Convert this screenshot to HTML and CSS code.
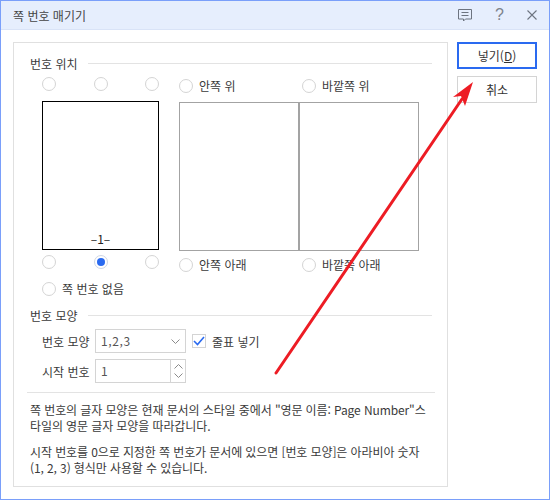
FILE: index.html
```html
<!DOCTYPE html>
<html lang="ko">
<head>
    <meta charset="UTF-8">
    <title>쪽 번호 매기기</title>
    <link rel="stylesheet" href="styles.css">
</head>
<body>
    <div class="window">
        <header class="titlebar">
            <span class="title">쪽 번호 매기기</span>
            <div class="title-icons">
                <svg width="14" height="13" viewBox="0 0 14 13" fill="none" stroke="#6d7480" stroke-width="1"><path d="M.5.5h13v9.500H7.500l-2 2v-2H.5z"/><path d="M3.500 3.500h7M3.500 6.500h7"/></svg>
                <span class="help">?</span>
                <svg width="10" height="10" viewBox="0 0 10 10" fill="none" stroke="#6d7480" stroke-width="1.1"><path d="M.5.5l9 9M9.500 .5l-9 9"/></svg>
            </div>
        </header>
        <div class="content">
            <main class="panel">
                <div class="group-title"><span>번호 위치</span><i></i></div>
                <section class="position">
                    <div class="single">
                        <div class="radio-row"><span class="radio"></span><span class="radio"></span><span class="radio"></span></div>
                        <div class="page"><span>–1–</span></div>
                        <div class="radio-row bottom"><span class="radio"></span><span class="radio on"></span><span class="radio"></span></div>
                        <label class="option none"><span class="radio"></span>쪽 번호 없음</label>
                    </div>
                    <div class="double">
                        <div class="option-row"><label class="option"><span class="radio"></span>안쪽 위</label><label class="option"><span class="radio"></span>바깥쪽 위</label></div>
                        <div class="spread"><div></div><div></div></div>
                        <div class="option-row lower"><label class="option"><span class="radio"></span>안쪽 아래</label><label class="option"><span class="radio"></span>바깥쪽 아래</label></div>
                    </div>
                </section>
                <div class="group-title shape-title"><span>번호 모양</span><i></i></div>
                <section class="shape">
                    <div class="field">
                        <label>번호 모양</label>
                        <div class="input select">1,2,3
                            <svg class="chev" width="9" height="5" viewBox="0 0 9 5" fill="none" stroke="#8a8a8a"><path d="M.5.5l4 4 4-4"/></svg>
                        </div>
                        <span class="check"><svg width="12" height="10" viewBox="0 0 12 10" fill="none" stroke="#2a6af0" stroke-width="1.6"><path d="M1 5l3.500 3.500L11 1"/></svg></span>
                        <span class="check-label">줄표 넣기</span>
                    </div>
                    <div class="field">
                        <label>시작 번호</label>
                        <div class="input spin">1
                            <div class="spinner">
                                <svg width="9" height="5" viewBox="0 0 9 5" fill="none" stroke="#8a8a8a"><path d="M.5 4.500l4-4 4 4"/></svg>
                                <svg width="9" height="5" viewBox="0 0 9 5" fill="none" stroke="#8a8a8a"><path d="M.5.5l4 4 4-4"/></svg>
                            </div>
                        </div>
                    </div>
                </section>
                <section class="notes">
                    <p>쪽 번호의 글자 모양은 현재 문서의 스타일 중에서 "영문 이름: Page Number"스타일의 영문 글자 모양을 따라갑니다.</p>
                    <p>시작 번호를 0으로 지정한 쪽 번호가 문서에 있으면 [번호 모양]은 아라비아 숫자 (1, 2, 3) 형식만 사용할 수 있습니다.</p>
                </section>
            </main>
            <aside class="buttons">
                <button class="btn primary">넣기(<u>D</u>)</button>
                <button class="btn">취소</button>
            </aside>
        </div>
        <svg class="arrow" width="550" height="500" viewBox="0 0 550 500">
            <path d="M276 373L462 99" stroke="#ed1c24" stroke-width="3" stroke-linecap="round" fill="none"/>
            <path d="M473 82L453 97 461 96 465 106z" fill="#ed1c24"/>
        </svg>
    </div>
</body>
</html>
```

FILE: styles.css
```css
* {
    margin: 0;
    padding: 0;
    box-sizing: border-box;
}

body {
    font-family: "Noto Sans CJK KR", "Noto Sans", sans-serif;
    font-size: 12px;
    color: #3a3a3a;
    background: #fff;
}

.window {
    position: relative;
    width: 550px;
    height: 500px;
    border: 1px solid #7a9ffa;
    overflow: hidden;
}

.titlebar {
    height: 29px;
    background: #e6eefd;
    border-bottom: 1px solid #d9e3f7;
    display: flex;
    align-items: center;
    justify-content: space-between;
    padding: 0 12px;
}

.title {
    font-size: 12px;
    color: #444;
}

.title-icons {
    display: flex;
    align-items: center;
    gap: 23px;
    color: #7d838d;
}

.help {
    font-family: "Liberation Sans", sans-serif;
    font-size: 16px;
    line-height: 16px;
}

.content {
    display: flex;
    padding: 12px 12px 0;
    gap: 9px;
}

.panel {
    width: 435px;
    height: 445px;
    border: 1px solid #e0e0e0;
    padding: 0 15px 0 16px;
}

.group-title {
    display: flex;
    align-items: center;
    gap: 10px;
    height: 20px;
    margin-top: 10px;
}

.group-title i {
    flex: 1;
    height: 1px;
    background: #e3e3e3;
}

.position {
    display: flex;
    height: 226px;
    padding-left: 12px;
    margin-top: 3px;
}

.single {
    width: 137px;
}

.radio-row {
    display: flex;
    justify-content: space-between;
    width: 117px;
    height: 24px;
    margin-top: 1px;
}

.radio-row.bottom {
    margin-top: 5px;
    height: 18px;
}

.radio {
    display: inline-block;
    flex: none;
    width: 14px;
    height: 14px;
    border: 1px solid #d4d4d4;
    border-radius: 50%;
    background: #fff;
}

.radio.on {
    position: relative;
    border-color: #cfd6e4;
}

.radio.on::after {
    content: "";
    position: absolute;
    left: 2px;
    top: 2px;
    width: 8px;
    height: 8px;
    border-radius: 50%;
    background: #2a6af0;
}

.page {
    width: 117px;
    height: 149px;
    border: 1px solid #000;
    display: flex;
    align-items: flex-end;
    justify-content: center;
    color: #222;
    line-height: 17px;
    padding-bottom: 2px;
}

.option {
    display: flex;
    align-items: center;
    gap: 6px;
    line-height: 14px;
}

.option.none {
    margin-top: 9px;
}

.option-row {
    display: flex;
    align-items: flex-start;
    height: 24px;
    margin-top: 3px;
}

.option-row .option {
    width: 123px;
}

.option-row.lower {
    height: 14px;
    margin-top: 7px;
}

.spread {
    display: flex;
    width: 240px;
    height: 149px;
    margin-top: -1px;
    border: 1px solid #a3a3a3;
}

.spread div {
    flex: 1;
}

.spread div:first-child {
    border-right: 2px solid #a3a3a3;
}

.shape-title {
    margin-top: 3px;
}

.shape {
    padding: 4px 0 9px 15px;
    border-bottom: 1px solid #e3e3e3;
    margin-left: -3px;
    margin-right: -3px;
}

.field {
    display: flex;
    align-items: center;
    height: 24px;
    margin-bottom: 6px;
}

.field:last-child {
    margin-bottom: 0;
}

.field label {
    width: 53px;
}

.input {
    position: relative;
    width: 91px;
    height: 24px;
    border: 1px solid #d4d4d4;
    padding-left: 5px;
    line-height: 22px;
    letter-spacing: 0.6px;
    color: #555;
}

.chev {
    position: absolute;
    right: 5px;
    top: 9px;
}

.spinner {
    position: absolute;
    right: 0;
    top: 0;
    bottom: 0;
    width: 15px;
    border-left: 1px solid #d4d4d4;
    display: flex;
    flex-direction: column;
    align-items: center;
    justify-content: space-evenly;
}

.spinner svg {
    display: block;
}

.check {
    display: flex;
    align-items: center;
    justify-content: center;
    width: 14px;
    height: 14px;
    margin-left: 6px;
    border: 1px solid #d4d4d4;
}

.check-label {
    margin-left: 6px;
}

.notes {
    padding-top: 9px;
    line-height: 16px;
    letter-spacing: -0.1px;
}

.notes p {
    margin-bottom: 10px;
}

.buttons {
    display: flex;
    flex-direction: column;
    gap: 7px;
}

.btn {
    width: 80px;
    height: 27px;
    border: 1px solid #d4d4d4;
    background: #fff;
    font-family: inherit;
    font-size: 12px;
    color: #333;
}

.btn.primary {
    border: 2px solid #2a6af0;
}

.arrow {
    position: absolute;
    left: -1px;
    top: -1px;
    pointer-events: none;
}
```
